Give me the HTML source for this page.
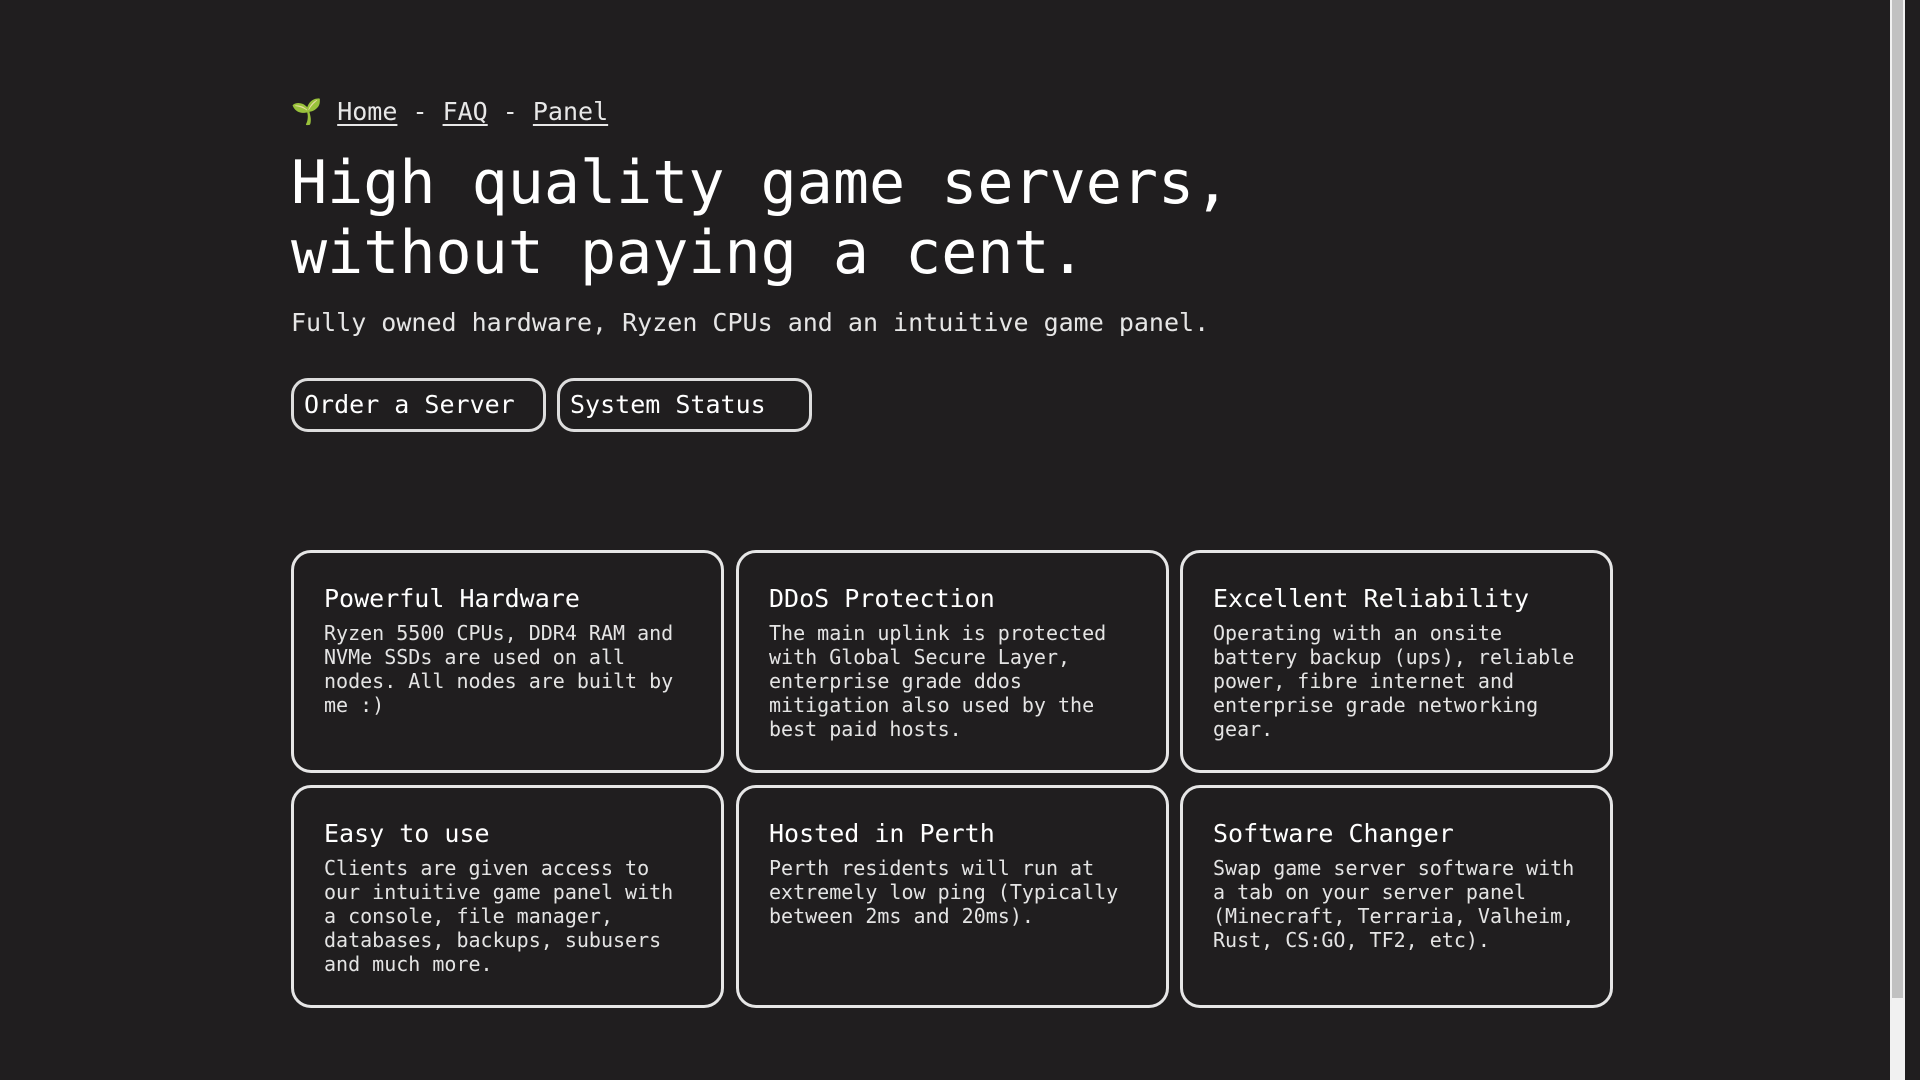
<!DOCTYPE html>
<html><head><meta charset="utf-8"><style>
html,body{margin:0;padding:0;}
body{width:1905px;height:1080px;background:#201e1f;color:#f0f0f0;font-family:"DejaVu Sans Mono","Liberation Mono",monospace;overflow:hidden;position:relative;}
.sb{position:absolute;right:0;top:0;width:15px;height:1080px;background:#f1f1f1;}
.sb div{position:absolute;left:2px;right:2px;top:0;height:998px;background:#c1c1c1;}
.wrap{position:absolute;left:291px;top:0;width:1322px;}
.nav{position:absolute;top:97px;left:0;font-size:25px;line-height:30px;white-space:pre;color:#e8e8e8;}
.nav a{color:#e8e8e8;text-decoration:underline;text-underline-offset:4px;}
h1{position:absolute;top:148px;left:0;margin:0;font-weight:normal;font-size:60px;line-height:70px;color:#fff;white-space:nowrap;}
.sub{position:absolute;top:308px;left:0;font-size:25px;line-height:30px;color:#e6e6e6;white-space:nowrap;}
.btn{position:absolute;top:378px;height:54px;width:255px;box-sizing:border-box;border:3px solid #ddd;border-radius:17px;font-size:25px;line-height:48px;padding-left:10px;color:#fff;}
.card{position:absolute;width:433px;height:223px;box-sizing:border-box;border:3px solid #e6e6e6;border-radius:20px;padding:30px 30px 0 30px;}
.card h2{margin:0;font-weight:normal;font-size:25px;line-height:32px;color:#fff;}
.card p{margin:6px 0 0;font-size:20px;line-height:24px;color:#e4e4e4;}
</style></head><body>
<div class="wrap">
<div class="nav">🌱 <a>Home</a> - <a>FAQ</a> - <a>Panel</a></div>
<h1>High quality game servers,<br>without paying a cent.</h1>
<div class="sub">Fully owned hardware, Ryzen CPUs and an intuitive game panel.</div>
<div class="btn" style="left:0">Order a Server</div>
<div class="btn" style="left:266px">System Status</div>
<div class="card" style="left:0;top:550px"><h2>Powerful Hardware</h2><p>Ryzen 5500 CPUs, DDR4 RAM and NVMe SSDs are used on all nodes. All nodes are built by me :)</p></div>
<div class="card" style="left:445px;top:550px"><h2>DDoS Protection</h2><p>The main uplink is protected with Global Secure Layer, enterprise grade ddos mitigation also used by the best paid hosts.</p></div>
<div class="card" style="left:889px;top:550px"><h2>Excellent Reliability</h2><p>Operating with an onsite battery backup (ups), reliable power, fibre internet and enterprise grade networking gear.</p></div>
<div class="card" style="left:0;top:785px"><h2>Easy to use</h2><p>Clients are given access to our intuitive game panel with a console, file manager, databases, backups, subusers and much more.</p></div>
<div class="card" style="left:445px;top:785px"><h2>Hosted in Perth</h2><p>Perth residents will run at extremely low ping (Typically between 2ms and 20ms).</p></div>
<div class="card" style="left:889px;top:785px"><h2>Software Changer</h2><p>Swap game server software with a tab on your server panel (Minecraft, Terraria, Valheim, Rust, CS:GO, TF2, etc).</p></div>
</div>
<div class="sb"><div></div></div>
</body></html>
